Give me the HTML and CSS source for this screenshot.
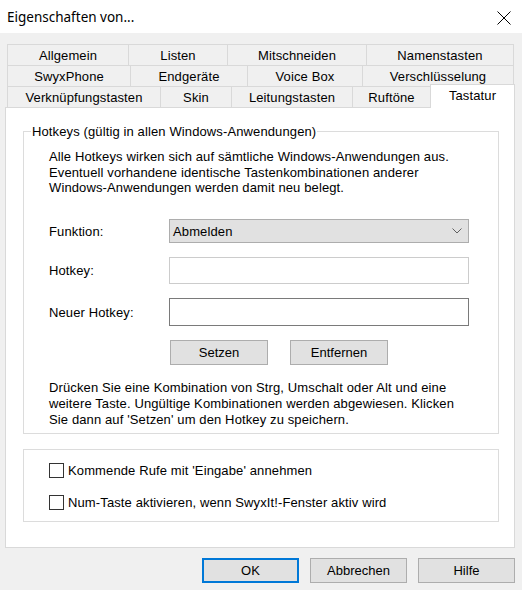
FILE: index.html
```html
<!DOCTYPE html>
<html lang="de">
<head>
<meta charset="utf-8">
<title>Eigenschaften von...</title>
<link rel="stylesheet" href="styles.css">
</head>
<body>
<div class="window">
  <header class="titlebar">
    <span class="title">Eigenschaften von...</span>
    <svg class="close" width="14" height="14" viewBox="0 0 14 14" aria-label="Schließen">
      <path d="M0.5 0.5 L13.5 13.5 M13.5 0.5 L0.5 13.5" stroke="#000" stroke-width="1" fill="none"/>
    </svg>
  </header>

  <main class="dialog">
    <nav class="tabs">
      <div class="tabrow row1">
        <div class="tab">Allgemein</div>
        <div class="tab">Listen</div>
        <div class="tab">Mitschneiden</div>
        <div class="tab">Namenstasten</div>
      </div>
      <div class="tabrow row2">
        <div class="tab">SwyxPhone</div>
        <div class="tab">Endgeräte</div>
        <div class="tab">Voice Box</div>
        <div class="tab">Verschlüsselung</div>
      </div>
      <div class="tabrow row3">
        <div class="tab">Verknüpfungstasten</div>
        <div class="tab">Skin</div>
        <div class="tab">Leitungstasten</div>
        <div class="tab">Ruftöne</div>
        <div class="tab active">Tastatur</div>
      </div>
    </nav>

    <section class="panel">
      <fieldset class="group">
        <legend>Hotkeys (gültig in allen Windows-Anwendungen)</legend>
        <div class="group-body">
          <p class="note">Alle Hotkeys wirken sich auf sämtliche Windows-Anwendungen aus.<br>Eventuell vorhandene identische Tastenkombinationen anderer<br>Windows-Anwendungen werden damit neu belegt.</p>

          <div class="form">
            <label class="label" for="fn">Funktion:</label>
            <div class="select" id="fn">
              <span>Abmelden</span>
              <svg class="chevron" width="10" height="6" viewBox="0 0 10 6">
                <path d="M0.5 0.5 L5 5 L9.5 0.5" stroke="#606060" stroke-width="1" fill="none"/>
              </svg>
            </div>

            <label class="label" for="hk">Hotkey:</label>
            <input class="input" id="hk" type="text">

            <label class="label" for="nhk">Neuer Hotkey:</label>
            <input class="input focused" id="nhk" type="text">
          </div>

          <div class="btnrow">
            <button class="button wide" type="button">Setzen</button>
            <button class="button wide" type="button">Entfernen</button>
          </div>

          <p class="help">Drücken Sie eine Kombination von Strg, Umschalt oder Alt und eine<br>weitere Taste. Ungültige Kombinationen werden abgewiesen. Klicken<br>Sie dann auf 'Setzen' um den Hotkey zu speichern.</p>
        </div>
      </fieldset>

      <fieldset class="group options">
        <div class="check"><span class="box"></span><span>Kommende Rufe mit 'Eingabe' annehmen</span></div>
        <div class="check"><span class="box"></span><span>Num-Taste aktivieren, wenn SwyxIt!-Fenster aktiv wird</span></div>
      </fieldset>
    </section>

    <footer class="actions">
      <button class="button default" type="button">OK</button>
      <button class="button" type="button">Abbrechen</button>
      <button class="button" type="button">Hilfe</button>
    </footer>
  </main>
</div>
</body>
</html>
```

FILE: styles.css
```css
* {
  box-sizing: border-box;
}

html,
body {
  margin: 0;
  padding: 0;
}

body {
  width: 522px;
  height: 590px;
  overflow: hidden;
  background: #f0f0f0;
  font-family: "Liberation Sans", Arial, sans-serif;
  font-size: 13px;
  letter-spacing: 0.12px;
  color: #000;
}

/* window caption */
.titlebar {
  height: 33px;
  background: #fff;
  display: flex;
  align-items: center;
  justify-content: space-between;
  padding: 2px 11px 0 7px;
}

.title {
  font-family: "Noto Sans", sans-serif;
  font-size: 13.5px;
  letter-spacing: 0;
  line-height: 1;
}

.close {
  display: block;
}

/* dialog body */
.dialog {
  height: 557px;
  padding-top: 11px;
}

/* three stacked rows of tabs */
.tabs {
  margin-left: 7px;
}

.tabrow {
  display: grid;
  height: 21px;
}

.row1 {
  grid-template-columns: 122px 99px 139px 147px;
}

.row2 {
  grid-template-columns: 124px 117px 115px 151px;
}

.row3 {
  grid-template-columns: 154px 71px 121px 78px 84px;
}

.tab {
  border-top: 1px solid #d9d9d9;
  border-right: 1px solid #d9d9d9;
  display: flex;
  align-items: center;
  justify-content: center;
  white-space: nowrap;
  line-height: 15px;
}

.tab:first-child {
  border-left: 1px solid #d9d9d9;
}

.tab.active {
  background: #fff;
  border-left: 1px solid #d9d9d9;
  width: 85px;
  height: 24px;
  margin: -2px 0 0 -1px;
  padding-bottom: 2px;
  align-self: start;
  position: relative;
  z-index: 1;
}

/* tab page */
.panel {
  margin-left: 5px;
  width: 510px;
  height: 441px;
  background: #fff;
  border: 1px solid #d9d9d9;
  padding-top: 16px;
}

.group {
  margin: 0 15px 0 17px;
  border: 1px solid #dcdcdc;
  padding: 0 0 5px 7px;
  min-width: 0;
}

.group legend {
  padding: 0 1px;
  line-height: 15px;
}

.group-body {
  padding-left: 18px;
}

.note {
  margin: 10px 0 0;
  line-height: 15.5px;
  white-space: nowrap;
}

.form {
  margin-top: 23.5px;
  display: grid;
  grid-template-columns: 120px 300px;
  grid-template-rows: 24px 27px 28px;
  row-gap: 14px;
  align-items: center;
}

.label {
  line-height: 15px;
}

.select {
  height: 24px;
  background: #e1e1e1;
  border: 1px solid #adadad;
  display: flex;
  align-items: center;
  justify-content: space-between;
  padding: 0 6px 0 3px;
}

.chevron {
  display: block;
}

.input {
  height: 100%;
  width: 100%;
  margin: 0;
  padding: 0 3px;
  border: 1px solid #cccccc;
  background: #fff;
  font: inherit;
  outline: none;
}

.input.focused {
  border-color: #7a7a7a;
}

.btnrow {
  margin-top: 14px;
  padding-left: 121px;
  display: flex;
  gap: 22px;
}

.button {
  width: 97px;
  height: 25px;
  margin: 0;
  padding: 0;
  border: 1px solid #adadad;
  background: #e1e1e1;
  font: inherit;
  color: #000;
  display: flex;
  align-items: center;
  justify-content: center;
}

.button.wide {
  width: 98px;
}

.button.default {
  border: 2px solid #0078d7;
}

.help {
  margin: 15px 0 0;
  line-height: 16px;
  white-space: nowrap;
}

/* checkbox group */
.group.options {
  margin-top: 15px;
  padding: 13px 0 11px 25px;
  display: flex;
  flex-direction: column;
  gap: 17px;
}

.check {
  display: flex;
  align-items: center;
  height: 15px;
  white-space: nowrap;
}

.box {
  width: 15px;
  height: 15px;
  border: 1px solid #333;
  background: #fff;
  margin-right: 4px;
  flex: none;
}

/* dialog buttons */
.actions {
  margin-top: 10px;
  padding-right: 7px;
  display: flex;
  justify-content: flex-end;
  gap: 11px;
}
```
